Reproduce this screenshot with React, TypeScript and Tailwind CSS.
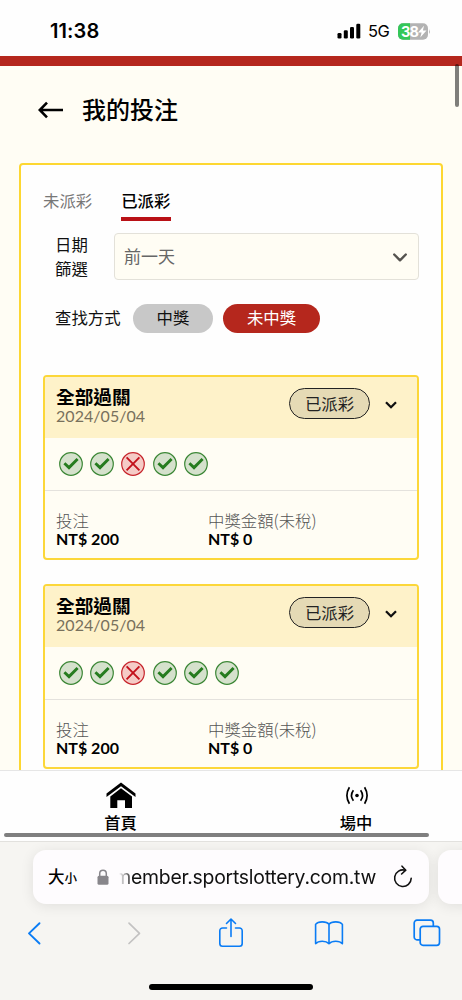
import React from "react";

type Result = "win" | "lose";

interface Ticket {
  id: number;
  title: string;
  date: string;
  results: Result[];
  stake: string;
  payout: string;
}

const tickets: Ticket[] = [
  {
    id: 1,
    title: "全部過關",
    date: "2024/05/04",
    results: ["win", "win", "lose", "win", "win"],
    stake: "NT$ 200",
    payout: "NT$ 0",
  },
  {
    id: 2,
    title: "全部過關",
    date: "2024/05/04",
    results: ["win", "win", "lose", "win", "win", "win"],
    stake: "NT$ 200",
    payout: "NT$ 0",
  },
];

function StatusBar() {
  return (
    <div className="flex h-[56px] shrink-0 items-start justify-between bg-[#fefefe] pl-[50px] pr-[31px] pt-[19px] font-['Inter','Liberation_Sans',sans-serif]">
      <span className="text-[20px] leading-6 font-semibold tracking-[0.1px] text-black">11:38</span>
      <div className="flex h-6 items-center">
        <svg width="24" height="16" viewBox="0 0 24 16" className="mt-[-1px]">
          <rect x="0.5" y="10" width="4" height="5.5" rx="1.3" />
          <rect x="6.8" y="7.3" width="4" height="8.2" rx="1.3" />
          <rect x="13" y="4" width="4" height="11.5" rx="1.3" />
          <rect x="19.3" y="0.8" width="4" height="14.7" rx="1.3" />
        </svg>
        <span className="ml-[7px] w-[23px] text-[16.5px] font-normal tracking-[-0.5px] text-black">5G</span>
        <svg width="33" height="17" viewBox="0 0 33 17" className="ml-[7px]">
          <defs>
            <clipPath id="battery">
              <rect x="0" y="0.3" width="30" height="16.4" rx="5" />
            </clipPath>
          </defs>
          <g clipPath="url(#battery)">
            <rect width="30" height="17" fill="#b3b3b3" />
            <rect width="12" height="17" fill="#34c759" />
          </g>
          <path d="M31 6 q1.6 2.5 0 5z" fill="#b3b3b3" />
          <text x="3" y="13.7" fontSize="14.5" fontWeight="700" fill="#fff" letterSpacing="-0.9">38</text>
          <path d="M26 2.8 20 9.5h3.6L22.3 14.4l6.2-6.9h-3.6z" fill="#fff" />
        </svg>
      </div>
    </div>
  );
}

function ResultIcon({ result }: { result: Result }) {
  if (result === "win") {
    return (
      <svg width="24" height="24" viewBox="0 0 24 24" fill="none">
        <circle cx="12" cy="12" r="11.3" fill="#d5e1cc" stroke="#3c8736" strokeWidth="1.2" />
        <path d="M5.4 11.2 10 15.6 18.6 7" stroke="#267c1f" strokeWidth="2.9" />
      </svg>
    );
  }
  return (
    <svg width="24" height="24" viewBox="0 0 24 24" fill="none">
      <circle cx="12" cy="12" r="11.3" fill="#f5cbc6" stroke="#c7262d" strokeWidth="1.2" />
      <path d="M5.6 5.4 18.4 18.4M18.4 5.4 5.6 18.4" stroke="#c3111b" strokeWidth="1.9" />
    </svg>
  );
}

function TicketCard({ ticket }: { ticket: Ticket }) {
  return (
    <article className="flex h-[185px] flex-col overflow-hidden rounded-[4px] border-[2px] border-[#fcd739] bg-[#fffdf4]">
      <header className="flex h-[61px] shrink-0 justify-between bg-[#fef2c9] pl-[11px] pr-[20px]">
        <div className="pt-[9px]">
          <h2 className="text-[18.7px] leading-[22px] font-bold text-black">{ticket.title}</h2>
          <p className="text-[16px] leading-[16px] tracking-[0.05px] text-[#78705c]">{ticket.date}</p>
        </div>
        <div className="mt-[11px] flex h-[31px] items-center">
          <span className="flex h-[31px] w-[81px] items-center justify-center rounded-full border border-[#222] bg-[#e5dab5] pt-[2px] text-[16.4px] leading-none text-[#222]">
            已派彩
          </span>
          <svg width="12" height="8" viewBox="0 0 12 8" fill="none" className="ml-[15px] mt-[2px]">
            <path d="M1 1.2 6 6.2 11 1.2" stroke="#111" strokeWidth="2.3" />
          </svg>
        </div>
      </header>
      <div className="flex h-[53px] shrink-0 items-center gap-[7.2px] border-b border-[#e4e2dd] pl-[14px]">
        {ticket.results.map((result, i) => (
          <ResultIcon key={i} result={result} />
        ))}
      </div>
      <dl className="flex pl-[11px] pt-[20px]">
        <div className="w-[152px]">
          <dt className="font-['Noto_Sans_CJK_TC',sans-serif] text-[16.4px] leading-[18px] font-light text-[#555]">投注</dt>
          <dd className="pt-px text-[16px] leading-[17px] font-bold text-black">{ticket.stake}</dd>
        </div>
        <div>
          <dt className="font-['Noto_Sans_CJK_TC',sans-serif] text-[16.4px] leading-[18px] font-light text-[#555]">中獎金額(未稅)</dt>
          <dd className="pt-px text-[16px] leading-[17px] font-bold text-black">{ticket.payout}</dd>
        </div>
      </dl>
    </article>
  );
}

function BottomNav() {
  return (
    <nav className="relative flex h-[71px] shrink-0 border-t border-[#e6e6e6] bg-[#fefefe]">
      <a className="flex w-[241px] shrink-0 flex-col items-center pt-[10px]">
        <svg width="30" height="28" viewBox="0 0 30 28" className="ml-px">
          <path d="M0.5 12.5 15 1.5 29.5 12.5V16L15 5.3 0.5 16z" />
          <path d="M15 7.2 26 15.4V27H19V19.2H11.3V27H4.3V15.4z" />
        </svg>
        <span className="mt-[4px] text-[16.3px] leading-[20px] font-medium text-black">首頁</span>
      </a>
      <a className="flex w-[230px] shrink-0 flex-col items-center pt-[15px]">
        <svg width="24" height="19" viewBox="0 0 24 19" fill="none" stroke="#000" strokeWidth="1.7" className="ml-px">
          <circle cx="12" cy="9.5" r="1.8" fill="#000" stroke="none" />
          <path d="M8.4 4.2Q4.6 9.5 8.4 14.8M15.6 4.2Q19.4 9.5 15.6 14.8" />
          <path d="M4.4 1.2Q-0.6 9.5 4.4 17.8M19.6 1.2Q24.6 9.5 19.6 17.8" />
        </svg>
        <span className="mt-[8px] text-[16.3px] leading-[20px] font-medium text-black">場中</span>
      </a>
      <div className="absolute bottom-[4px] left-[4px] h-[4px] w-[425px] rounded-full bg-[#7f7f7f]" />
    </nav>
  );
}

function BrowserBar() {
  return (
    <footer className="flex flex-1 flex-col overflow-hidden border-t border-[#e2e1de] bg-[#f6f5f2]">
      <div className="mt-[8px] flex h-[54px] shrink-0 gap-[9px] pl-[33px]">
        <div className="flex w-[396px] shrink-0 items-center rounded-[13px] bg-[#fefcfe] pl-[15px] shadow-[0_2px_14px_rgba(0,0,0,0.09)]">
          <span className="flex w-[31px] shrink-0 items-baseline font-medium leading-none text-black">
            <span className="text-[16.5px]">大</span>
            <span className="text-[12.5px]">小</span>
          </span>
          <svg width="12" height="16" viewBox="0 0 12 16" className="ml-[18px] shrink-0">
            <path d="M2.7 8V4.5a3.3 3.3 0 0 1 6.6 0V8" fill="none" stroke="#88868b" strokeWidth="1.5" />
            <rect x="0.5" y="6.8" width="11" height="9" rx="1.5" fill="#88868b" />
          </svg>
          <div className="flex h-[30px] w-[267px] shrink-0 items-center justify-end whitespace-nowrap pt-[2px]">
            <span className="shrink-0 font-['Inter','Liberation_Sans',sans-serif] text-[19.4px] tracking-[-0.25px] text-[#111] [mask-image:linear-gradient(to_right,transparent_5px,black_19px)]">
              member.sportslottery.com.tw
            </span>
          </div>
          <svg width="20" height="24" viewBox="0 0 20 24" fill="none" stroke="#111" strokeWidth="1.6" strokeLinecap="round" strokeLinejoin="round" className="ml-[17px] shrink-0">
            <path d="M12.2 5.2A8.3 8.3 0 1 0 18.2 13.3" />
            <path d="M9 1.2 12.8 5.2 8.6 9" />
          </svg>
        </div>
        <div className="h-[54px] w-[60px] shrink-0 rounded-[13px] bg-[#fefcfe] shadow-[0_2px_14px_rgba(0,0,0,0.09)]" />
      </div>
      <div className="mt-[12px] flex h-[34px] shrink-0 items-center pl-[27px]">
        <svg width="14" height="24" viewBox="0 0 14 24" fill="none" stroke="#0a7cf5" strokeWidth="1.9" strokeLinecap="round" strokeLinejoin="round">
          <path d="M12.5 2.2 2 12.4 12.5 22.5" />
        </svg>
        <svg width="14" height="24" viewBox="0 0 14 24" fill="none" stroke="#c3c2c2" strokeWidth="1.7" strokeLinecap="round" strokeLinejoin="round" className="ml-[86px]">
          <path d="M2 2.2 12.5 12.4 2 22.5" />
        </svg>
        <svg width="26" height="32" viewBox="0 0 26 32" fill="none" stroke="#0a7cf5" strokeWidth="1.6" strokeLinecap="round" strokeLinejoin="round" className="ml-[77px]">
          <path d="M8.5 11H4.5A2.7 2.7 0 0 0 1.8 13.7V26.5A2.7 2.7 0 0 0 4.5 29.2H21.5A2.7 2.7 0 0 0 24.2 26.5V13.7A2.7 2.7 0 0 0 21.5 11H17.5" />
          <path d="M13 19.5V2.2M8.5 6.5 13 2 17.5 6.5" />
        </svg>
        <svg width="30" height="26" viewBox="0 0 30 26" fill="none" stroke="#0a7cf5" strokeWidth="1.6" strokeLinejoin="round" className="ml-[69.5px]">
          <path d="M15 4.4C12.5 1 4 1 1.6 4.4V23.6C4.5 20.5 12 20.5 15 23.6 18 20.5 25.5 20.5 28.4 23.6V4.4C26 1 17.5 1 15 4.4Z" />
          <path d="M15 4.4V23.6" />
        </svg>
        <svg width="28" height="28" viewBox="0 0 28 28" fill="none" stroke="#0a7cf5" strokeWidth="1.7" className="ml-[69px]">
          <path d="M7.2 20.8H4A2.8 2.8 0 0 1 1.2 18V4A2.8 2.8 0 0 1 4 1.2H17.5A2.8 2.8 0 0 1 20.3 4V7.3" />
          <rect x="7.2" y="7.3" width="19.3" height="19" rx="2.8" />
        </svg>
      </div>
      <div className="mt-[34px] ml-[149px] h-[6px] w-[164px] shrink-0 rounded-full bg-black" />
    </footer>
  );
}

export default function App() {
  return (
    <div className="relative flex h-[1000px] w-[462px] flex-col overflow-hidden bg-[#fffdf4] font-['Lato','Noto_Sans_CJK_TC',sans-serif]">
      <StatusBar />
      <div className="h-[10px] shrink-0 bg-[#b5271d]" />
      <div className="absolute top-[64px] right-[3px] h-[43px] w-[4px] rounded-full bg-black/50" />

      <main className="h-[704px] shrink-0 overflow-hidden">
        <div className="flex h-[97px] items-start pl-[38px] pt-[28px]">
          <svg width="26" height="18" viewBox="0 0 26 18" fill="none" stroke="#000" strokeWidth="2.6" className="mt-[7px]">
            <path d="M1.5 9H25M9 1.7 1.8 9 9 16.3" />
          </svg>
          <h1 className="ml-[18px] text-[24px] leading-[32px] font-medium text-black">我的投注</h1>
        </div>

        <section className="ml-[19px] h-[640px] w-[424px] rounded-[4px] border-[2px] border-[#fdd731] bg-[#fefefe] px-[22px]">
          <div className="flex gap-[29px] pt-[24px] text-[16.4px] leading-[24px]">
            <button className="h-[32px] pb-[8px] text-[#777]">未派彩</button>
            <button className="h-[32px] w-[50px] border-b-[4px] border-[#b91116] pb-[4px] text-left font-medium text-black">已派彩</button>
          </div>

          <div className="mt-[12px] flex">
            <label className="w-[71px] pl-[12px] text-[16.4px] leading-[23.5px] text-[#111]">
              日期
              <br />
              篩選
            </label>
            <button className="flex h-[47px] w-[305px] items-center justify-between rounded-[4px] border border-[#e3e1d9] bg-[#fffdf4] pl-[9px] pr-[11px] text-[17px] text-[#666]">
              <span>前一天</span>
              <svg width="14" height="9" viewBox="0 0 14 9" fill="none" stroke="#55534f" strokeWidth="2.4" strokeLinecap="round" strokeLinejoin="round" className="mt-[1px]">
                <path d="M1.2 1.5 7 7.3 12.8 1.5" />
              </svg>
            </button>
          </div>

          <div className="mt-[24px] flex h-[29px] items-center pl-[12px] text-[16.4px] leading-none">
            <span className="w-[78px] text-[#111]">查找方式</span>
            <button className="flex h-[29px] w-[80px] items-center justify-center rounded-full bg-[#c8c8c8] text-[#111]">中獎</button>
            <button className="ml-[10px] flex h-[29px] w-[97px] items-center justify-center rounded-full bg-[#b5271d] text-white">未中獎</button>
          </div>

          <div className="mt-[42px] flex flex-col gap-[24px]">
            {tickets.map((ticket) => (
              <TicketCard key={ticket.id} ticket={ticket} />
            ))}
          </div>
        </section>
      </main>

      <BottomNav />
      <BrowserBar />
    </div>
  );
}
